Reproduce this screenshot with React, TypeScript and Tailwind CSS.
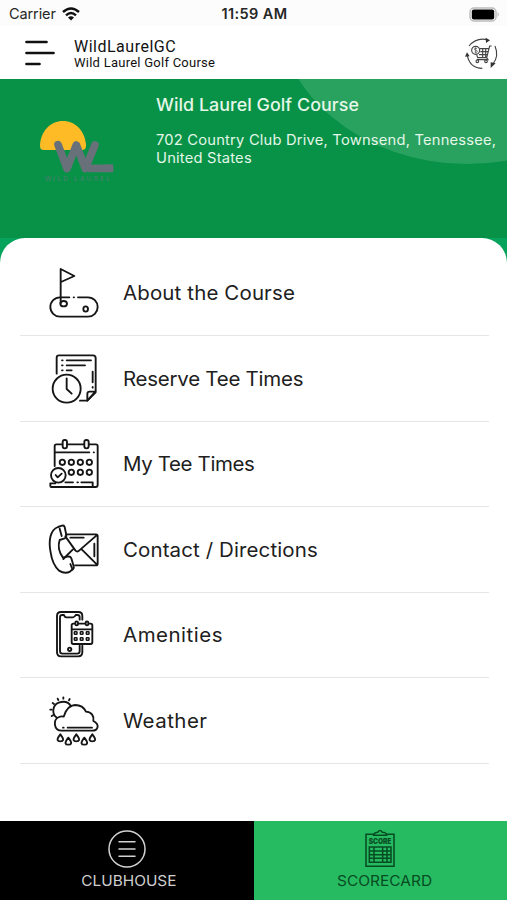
import type { ReactNode } from "react";

const dots = (points: number[][], r: number) =>
  points.map(([cx, cy]) => <circle key={`${cx}-${cy}`} cx={cx} cy={cy} r={r} />);

function RowIcon({ top, children }: { top: number; children: ReactNode }) {
  return (
    <svg
      viewBox={`0 ${top} 210 195`}
      className="ml-5 h-[65px] w-[70px] shrink-0"
      fill="none"
      stroke="#151515"
      strokeWidth="5.6"
      strokeLinecap="round"
      strokeLinejoin="round"
    >
      {children}
    </svg>
  );
}

const golf = (
  <RowIcon top={0}>
    <path d="M62 130V27l41 21-40 18" />
    <path d="M88 112H60a29 29 0 0 0 0 58h84a29 29 0 0 0 0-58h-30M101 112h1" />
    <ellipse cx="71" cy="131" rx="10" ry="8" />
    <ellipse cx="137" cy="147" rx="7" ry="8" />
  </RowIcon>
);

const reserve = (
  <RowIcon top={1}>
    <path d="M50 84V36q0-7 7-7h102q8 0 8 8v103l-25 25h-22" />
    <path d="M142 165v-20q0-7 7-7h17z" />
    <path d="M66 44h2M80 44h73M66 59h2M80 59h55M66 74h2M80 74h15M158 78v32M158 124v2" />
    <circle cx="80" cy="129" r="42" />
    <path d="M80 98v32l15 14" />
  </RowIcon>
);

const calendar = (
  <RowIcon top={3}>
    <path d="M44 108V48q0-5 5-5h18M82 43h50M147 43h21q5 0 5 5v117q0 6-6 6H34q-3 0-3-4v-7h15M76 157h23M112 157h2M124 157h34v14" />
    <rect x="68" y="30" width="13" height="25" rx="6" />
    <rect x="133" y="30" width="13" height="25" rx="6" />
    <path d="M46 67h102M161 67h1" />
    {dots([[67, 97], [94, 97], [121, 97], [148, 97], [94, 127], [121, 127], [148, 127]], 8)}
    <circle cx="55" cy="136" r="22" />
    <path d="m47 135 6 7 12-11" />
  </RowIcon>
);

const contact = (
  <RowIcon top={5}>
    <path d="M78 57h90q5 0 5 5v83q0 5-5 5h-63M76 63l30 42q6 7 12 0l51-44M125 102l43 43M98 103l-28 28M91 67h40M163 85v38" />
    <path d="m54 35 12-4q6-2 8 4l5 24q1 7-5 10l-15 5q-9 27 10 53l14-3q8-2 11 5l7 24q2 6-4 9l-7 7q-15 8-33-3Q37 147 32 112C25 76 30 44 54 35Z" />
    <path d="m59 40 6 22M91 146l7 17" />
  </RowIcon>
);

const amenities = (
  <RowIcon top={-4}>
    <path d="M127 49V38q0-12-12-12H63q-12 0-12 12v108q0 13 12 13h52q12 0 12-12v-20" />
    <path d="M119 49v-7q0-7-7-7h-5q-3 7-8 7H79q-5 0-7-7h-5q-7 0-7 7v101q0 8 7 8h45q7 0 7-7v-17" />
    <rect x="95" y="61" width="62" height="61" rx="5" />
    <path d="M96 78h60" />
    <rect x="106" y="54" width="8" height="12" rx="4" fill="white" />
    <rect x="137" y="54" width="8" height="12" rx="4" fill="white" />
    <g strokeWidth="4.5">
      {[103, 121, 139].map((x) => (
        <g key={x}>
          <rect x={x} y="85" width="8" height="8" rx="2" />
          <rect x={x} y="103" width="8" height="8" rx="2" />
        </g>
      ))}
    </g>
    <circle cx="89" cy="138" r="5" />
  </RowIcon>
);

const weather = (
  <RowIcon top={0}>
    <path d="M51 89C34 78 37 52 56 44q26-9 37 11" />
    <path d="M70 28v4M53 32l2 4M38 45l4 3M31 65h4M35 84l4-2M89 33l-2 4" />
    <path d="M65 128C41 128 38 95 57 87c6-3 10-2 14-1 6-20 15-34 34-35 17 0 28 9 33 20 17 1 25 13 22 28 21 11 14 29-4 29Z" />
    <path d="M69 119h2M83 119h73" />
    {[[61, 139], [85, 149], [109, 139], [133, 149], [157, 139]].map(([x, y]) => (
      <path key={x} d={`M${x} ${y}c-14 18-8 21 0 21s14-3 0-21Z`} />
    ))}
  </RowIcon>
);

const rows: { icon: ReactNode; label: string; spacing: string }[] = [
  { icon: golf, label: "About the Course", spacing: "tracking-[0.13px]" },
  { icon: reserve, label: "Reserve Tee Times", spacing: "tracking-[-0.24px]" },
  { icon: calendar, label: "My Tee Times", spacing: "tracking-[-0.35px]" },
  { icon: contact, label: "Contact / Directions", spacing: "tracking-[0.11px]" },
  { icon: amenities, label: "Amenities", spacing: "tracking-[0.48px]" },
  { icon: weather, label: "Weather", spacing: "tracking-[0.45px]" },
];

function StatusBar() {
  return (
    <div className="grid h-[26px] grid-cols-3 items-center bg-[#fcfcfc] pl-[9px] pr-[7px] pt-0.5 font-['Inter',sans-serif] text-[14.5px] leading-4 text-[#262626]">
      <div className="flex items-center gap-[6px]">
        <span className="tracking-[-0.1px]">Carrier</span>
        <svg viewBox="0 0 18 14" className="h-[14px] w-[18px]" fill="none" stroke="#111" strokeWidth="2.4">
          <path d="M1 5Q9-2 17 5M4 8.3q5-4.4 10 0" />
          <path d="m9 13.5-3-3q3-2.5 6 0z" fill="#111" stroke="none" />
        </svg>
      </div>
      <span className="whitespace-nowrap text-center font-semibold tracking-[0.4px]">11:59 AM</span>
      <svg viewBox="0 0 31 15" className="h-[15px] w-[31px] justify-self-end">
        <rect x="1" y="1" width="26" height="13" rx="4" fill="#fff" stroke="#bbb" strokeWidth="1.4" />
        <rect x="2.8" y="2.6" width="22.4" height="9.8" rx="2" fill="#000" />
        <path d="M28.6 5q2 2.5 0 5z" fill="#aaa" />
      </svg>
    </div>
  );
}

function CartIcon() {
  return (
    <svg viewBox="0 0 156 150" className="mt-1 h-[50px] w-[52px]" fill="none" stroke="#444" strokeWidth="3.4">
      <path d="M42 48Q64 21 98 29M120 48q13 31-7 55M82 115q-37 0-45-38" />
      <path d="m92 23 13 8-12 8zM107 97l15 3-15 14zM30 80l6-13 8 12z" fill="#333" stroke="none" />
      <circle cx="62" cy="61" r="12" />
      <path d="M66 56q-8-4-8 1 0 3 5 4t4 4q-2 4-8 1M62 52v18" strokeWidth="2" />
      <path d="M110 48h-6l-9 35H68l-3-9M74 56h27M76 65h23M72 74h25M83 55v27M92 55v27M95 83l4 6H65" />
      <circle cx="67" cy="94" r="4" />
      <circle cx="93" cy="94" r="4" />
    </svg>
  );
}

function Header() {
  return (
    <header className="flex h-[53px] items-center bg-white pl-[25px]">
      <svg viewBox="0 0 30 26" className="h-[26px] w-[30px]" stroke="#111" strokeWidth="2.7" strokeLinecap="round">
        <path d="M1.5 2h20M1.5 13h27M1.5 24h13" />
      </svg>
      <div className="ml-[19px] flex-1 pt-[2px] font-['Roboto',sans-serif] text-[#111]">
        <div className="text-[16px] leading-[17px] tracking-[0.5px]">WildLaurelGC</div>
        <div className="text-[13px] leading-[15px] tracking-[0.25px]">Wild Laurel Golf Course</div>
      </div>
      <CartIcon />
    </header>
  );
}

function Logo() {
  return (
    <svg viewBox="0 0 240 190" className="ml-[37px] mt-[41px] h-[63.3px] w-20 shrink-0">
      <path d="M19 90Q8 90 9 76C11 34 40 3 78 3s66 31 69 70q1 17-10 17Z" fill="#ffbb25" />
      <g fill="none" stroke="#68717a" strokeWidth="23" strokeLinejoin="round" strokeLinecap="round">
        <path d="m63 74 27 72 28-71 27 71 29-71" />
        <path d="M157 145h60" />
        <path d="M205 145h24" strokeLinecap="butt" />
      </g>
      <text x="23" y="184" fontSize="20" textLength="196" fill="#4f7d70" className="font-['Inter',sans-serif]">
        WILD LAUREL
      </text>
    </svg>
  );
}

function Hero() {
  return (
    <section className="relative flex h-[159px] overflow-hidden bg-[#079247] font-['Inter',sans-serif] text-[#e5f7e9]">
      <div className="absolute -top-[236px] left-[276px] h-[321px] w-[382px] rounded-[50%] bg-[#29a25f]" />
      <Logo />
      <div className="relative ml-[39px] origin-left scale-x-[1.05] pt-[15px]">
        <h1 className="whitespace-nowrap text-[17px] font-medium leading-[22px] tracking-[0.05px]">Wild Laurel Golf Course</h1>
        <p className="mt-[15px] whitespace-nowrap text-[14px] leading-[17.5px] tracking-[0.2px]">
          702 Country Club Drive, Townsend, Tennessee,
          <br />
          United States
        </p>
      </div>
    </section>
  );
}

function ScoreIcon() {
  return (
    <svg viewBox="0 0 90 116" className="h-[38.7px] w-[30px]" fill="none" stroke="#064c23" strokeWidth="4.6">
      <path d="M27 16H3v96h84V16H63" />
      <path d="M26 19q2-9 12-9 7-11 14 0 12 0 13 9Z" />
      <text x="11" y="44" fontSize="22" fontWeight="900" textLength="68" lengthAdjust="spacingAndGlyphs" fill="#064c23" stroke="none" className="font-['Inter',sans-serif]">
        SCORE
      </text>
      <path d="M13 54h65v46H13zM13 66h65M13 77h65M13 88h65M27 54v46M53 54v46M66 54v46" />
    </svg>
  );
}

function BottomTabs() {
  return (
    <nav className="grid h-[79px] grid-cols-2 font-['Inter',sans-serif] text-[14.5px] leading-5">
      <div className="flex flex-col items-center bg-black pt-[9px] text-[#cfcfcf]">
        <svg viewBox="0 0 38 38" className="ml-px h-[38px] w-[38px]" fill="none" stroke="#d2d2d2" strokeWidth="1.5" strokeLinecap="round">
          <circle cx="19" cy="19" r="18" />
          <path d="M11 11.8h16M11 19h16M11 26.2h16" />
        </svg>
        <span className="ml-1 mt-[3px] scale-x-[1.06]">CLUBHOUSE</span>
      </div>
      <div className="flex flex-col items-center bg-[#27bb61] pt-[8.3px] text-[#064c23]">
        <ScoreIcon />
        <span className="ml-2 mt-[3px] scale-x-[1.065]">SCORECARD</span>
      </div>
    </nav>
  );
}

export default function App() {
  return (
    <div className="flex h-[900px] w-full flex-col overflow-hidden bg-white">
      <StatusBar />
      <Header />
      <Hero />
      <div className="flex-1 bg-[#05a35b]">
        <main className="h-full rounded-t-[25px] bg-white pl-5 pr-[18px] pt-[12.5px]">
          {rows.map((row) => (
            <div key={row.label} className="flex h-[85.5px] items-center border-b border-[#e6e6e6]">
              {row.icon}
              <span className={`ml-[13px] origin-left scale-x-[1.05] whitespace-nowrap pt-0.5 font-['Inter',sans-serif] text-[19.5px] text-[#202020] ${row.spacing}`}>
                {row.label}
              </span>
            </div>
          ))}
        </main>
      </div>
      <BottomTabs />
    </div>
  );
}
